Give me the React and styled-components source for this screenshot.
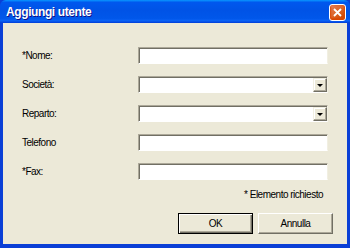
import React from 'react';
import styled, { createGlobalStyle } from 'styled-components';

const GlobalStyle = createGlobalStyle`
  html, body {
    margin: 0;
    padding: 0;
    width: 350px;
    height: 248px;
    overflow: hidden;
    background: #ece9d8;
  }
`;

const StyledWindow = styled.div`
  width: 350px;
  height: 248px;
  box-sizing: border-box;
  display: flex;
  flex-direction: column;
  background: #0a3fd6;
  font-family: 'Liberation Sans', Arial, sans-serif;
  font-size: 10px;
  letter-spacing: -0.5px;
  color: #000;
`;

const TitleBar = styled.div`
  height: 23px;
  flex: none;
  display: flex;
  align-items: center;
  justify-content: space-between;
  padding: 0 4px 0 6px;
  border-radius: 6px 6px 0 0;
  background: linear-gradient(
    180deg,
    #0997ff 0%,
    #0058ee 10%,
    #0053e6 45%,
    #0057ea 80%,
    #0a62f5 90%,
    #003dd7 100%
  );
`;

const Title = styled.span`
  color: #fff;
  font-weight: bold;
  font-size: 12px;
  letter-spacing: -0.4px;
  text-shadow: 1px 1px #0f1089;
`;

const CloseButton = styled.button`
  width: 17px;
  height: 17px;
  margin-top: 1px;
  padding: 0;
  display: flex;
  align-items: center;
  justify-content: center;
  border: 1px solid #fff;
  border-radius: 3px;
  background: radial-gradient(circle at 90% 90%, #cc4600 0%, #dc6527 50%, #e0774a 80%, #f0a48a 100%);
  box-shadow: inset 0 -1px 2px 1px #da4600;
`;

const Body = styled.div`
  flex: 1;
  margin: 0 3px 4px 3px;
  background: #ece9d8;
  padding: 24px 19px 0 19px;
  display: flex;
  flex-direction: column;
`;

const Form = styled.div`
  display: flex;
  flex-direction: column;
  gap: 12px;
`;

const Row = styled.div`
  display: flex;
  align-items: center;
  height: 17px;
`;

const Label = styled.span`
  width: 116px;
  flex: none;
`;

const Field = styled.div`
  width: 190px;
  height: 17px;
  box-sizing: border-box;
  background: #fff;
  display: flex;
  justify-content: flex-end;
  align-items: stretch;
  padding: 1px 0 0 1px;
  border-top: 1px solid #aca899;
  border-left: 1px solid #aca899;
  border-right: 1px solid #f1efe2;
  border-bottom: 1px solid #fff;
  box-shadow: inset 1px 1px 0 #716f64;
`;

const DropButton = styled.div`
  width: 14px;
  box-sizing: border-box;
  background: #ece9d8;
  display: flex;
  align-items: center;
  justify-content: center;
  border-top: 1px solid #f1efe2;
  border-left: 1px solid #f1efe2;
  border-right: 1px solid #716f64;
  border-bottom: 1px solid #716f64;
  box-shadow: inset -1px -1px 0 #aca899, inset 1px 1px 0 #fff;
`;

const Arrow = styled.span`
  width: 0;
  height: 0;
  margin-top: 1px;
  border-left: 3px solid transparent;
  border-right: 3px solid transparent;
  border-top: 3px solid #000;
`;

const Note = styled.div`
  margin-top: 9px;
  align-self: flex-end;
  margin-right: 5px;
`;

const Buttons = styled.div`
  margin-top: 13px;
  display: flex;
  justify-content: flex-end;
  gap: 5px;
  margin-right: -5px;
`;

const Button = styled.button`
  width: 75px;
  height: 21px;
  box-sizing: border-box;
  font-family: 'Liberation Sans', Arial, sans-serif;
  font-size: 10px;
  letter-spacing: -0.5px;
  color: #000;
  background: #ece9d8;
  padding: 0;
  border: 1px solid ${({ $default }) => ($default ? '#000' : '#fff')};
  border-right-color: ${({ $default }) => ($default ? '#000' : '#716f64')};
  border-bottom-color: ${({ $default }) => ($default ? '#000' : '#716f64')};
  box-shadow: ${({ $default }) =>
    $default
      ? 'inset 1px 1px 0 #fff, inset -1px -1px 0 #716f64, inset -2px -2px 0 #aca899'
      : 'inset -1px -1px 0 #aca899'};
`;

const fields = [
  { label: '*Nome:' },
  { label: 'Società:', select: true },
  { label: 'Reparto:', select: true },
  { label: 'Telefono' },
  { label: '*Fax:' },
];

const App = () => (
  <>
    <GlobalStyle />
    <StyledWindow>
      <TitleBar>
        <Title>Aggiungi utente</Title>
        <CloseButton aria-label="Chiudi">
          <svg width="9" height="9" viewBox="0 0 9 9">
            <path d="M1 1 L8 8 M8 1 L1 8" stroke="#fff" strokeWidth="1.8" />
          </svg>
        </CloseButton>
      </TitleBar>
      <Body>
        <Form>
          {fields.map((f) => (
            <Row key={f.label}>
              <Label>{f.label}</Label>
              <Field>
                {f.select && (
                  <DropButton>
                    <Arrow />
                  </DropButton>
                )}
              </Field>
            </Row>
          ))}
        </Form>
        <Note>* Elemento richiesto</Note>
        <Buttons>
          <Button $default>OK</Button>
          <Button>Annulla</Button>
        </Buttons>
      </Body>
    </StyledWindow>
  </>
);

export default App;
